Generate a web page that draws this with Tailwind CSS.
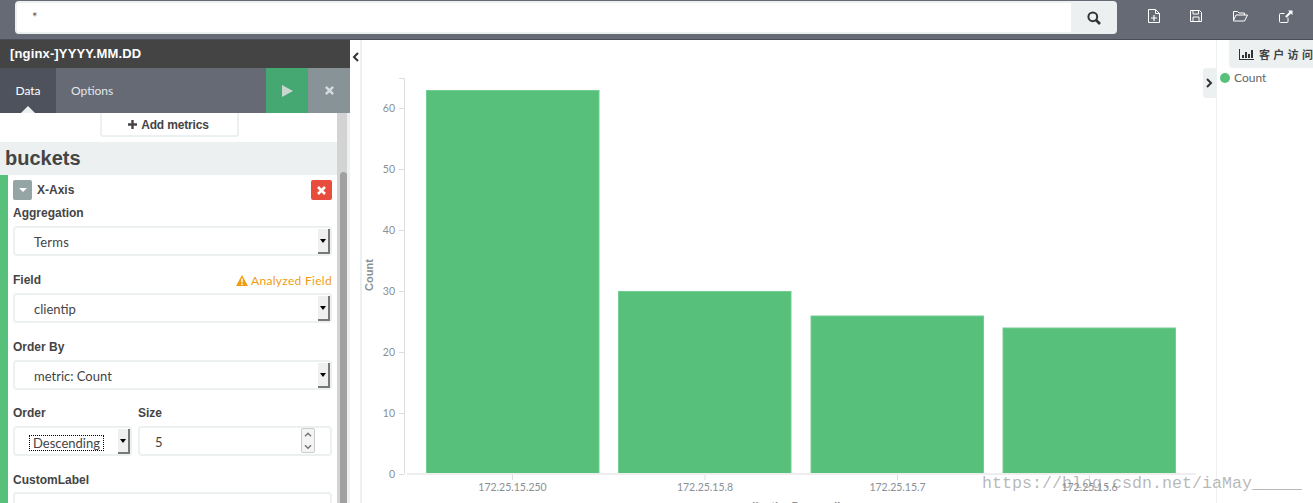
<!DOCTYPE html>
<html lang="en">
<head>
    <meta charset="UTF-8">
    <title>Visualize</title>
    <script src="https://cdn.jsdelivr.net/npm/@tailwindcss/browser@4"></script>
</head>
<body class="w-[1313px] h-[503px] overflow-hidden relative bg-white text-[#444] font-['Liberation_Sans',sans-serif]">
    <!-- search bar -->
    <div class="h-10 bg-[#666a75] border-b border-[#4a4d57] flex items-start pl-[15px] pt-px">
        <div class="w-[1056px] h-[33px] bg-white border-2 border-r-0 border-[#ecf0f1] rounded-l-[4px] pl-[15px] pt-[5px] text-[13px] text-[#555] font-['Lato',sans-serif]">*</div>
        <div class="w-[46px] h-[33px] bg-[#ecf0f1] rounded-r-[4px] flex items-center justify-center">
            <svg width="14" height="14" viewBox="0 0 14 14" fill="none" stroke="#333" stroke-width="2"><circle cx="5.8" cy="5.8" r="4.4"/><path d="M9 9l4 4" stroke-width="2.6"/></svg>
        </div>
        <div class="flex items-center h-[30px]">
            <svg class="ml-[31px]" width="12" height="14" viewBox="0 0 12 14" fill="none" stroke="#fff"><path d="M.5.5h7l4 4v9h-11zM7.500.5v4h4"/><path d="M6 6v6M3 9h6" stroke-width="1.2"/></svg>
            <svg class="ml-[30px]" width="12" height="12" viewBox="0 0 12 12" fill="none" stroke="#fff"><path d="M.5.5h9l2 2v9h-11zM3 .5v3.500h5.500v-3.500M3 11.500v-4.500h6v4.500"/></svg>
            <svg class="ml-[31px]" width="15" height="12" viewBox="0 0 15 12" fill="none" stroke="#fff"><path d="M.5 10.500v-9h4l1.500 1.500h5.500v2M.5 10.500l2.500-5.500h11.500l-3 6h-11z"/></svg>
            <svg class="ml-[31px]" width="14" height="13" viewBox="0 0 14 13" fill="none" stroke="#fff"><path d="M9 7.500v4a1 1 0 0 1-1 1h-6.500a1 1 0 0 1-1-1v-7a1 1 0 0 1 1-1h4"/><path d="M9 .5h4.500v4.500l-1.600-1.500-4.400 4.200-1.400-1.400 4.400-4.300z" fill="#fff" stroke="none"/></svg>
        </div>
    </div>

    <div class="flex h-[463px]">
        <!-- sidebar -->
        <div class="w-[350px] flex flex-col shrink-0">
            <div class="h-[28px] bg-[#444] text-white text-[13px] font-bold pl-[10px] leading-[28px] tracking-[0.15px]">[nginx-]YYYY.MM.DD</div>
            <div class="h-[45px] bg-[#666a75] flex text-[12px] font-['Lato',sans-serif] text-[#e4e6e8]">
                <div class="w-[56px] bg-[#4e525d] relative flex items-center justify-center text-white">
                    Data
                    <div class="absolute bottom-0 left-[21px] border-x-[7px] border-x-transparent border-b-[7px] border-b-[#ecf0f1]"></div>
                </div>
                <div class="flex-1 pl-[15px] flex items-center">Options</div>
                <div class="w-[42px] bg-[#45a873] flex items-center justify-center">
                    <svg width="11" height="12" viewBox="0 0 11 12"><path d="M0 0l11 6-11 6z" fill="#c9d6ce"/></svg>
                </div>
                <div class="w-[42px] bg-[#879396] flex items-center justify-center">
                    <svg width="9" height="9" viewBox="0 0 10 10" stroke="#d5dbdd" stroke-width="2.800"><path d="M1 1l8 8M9 1l-8 8"/></svg>
                </div>
            </div>
            <div class="flex-1 flex overflow-hidden">
                <div class="w-[337px] shrink-0">
                    <div class="h-[24px] w-[139px] ml-[100px] pt-[1px] pr-[2px] border-2 border-t-0 border-[#ecf0f1] rounded-b-[3px] flex items-center justify-center text-[12px] font-bold gap-1 tracking-[-0.15px]">
                        <svg width="9" height="9" viewBox="0 0 9 9" stroke="#444" stroke-width="2.400"><path d="M4.500 0v9M0 4.500h9"/></svg>
                        Add metrics
                    </div>
                    <div class="h-[33px] mt-[5px] bg-[#ecf0f1] pl-[5px] text-[20px] font-bold leading-[33px]">buckets</div>
                    <div class="border-l-[8px] border-[#57c17b] pl-[5px] pr-[5px] h-[328px]">
                        <div class="flex items-center pt-[5px] h-[25px]">
                            <div class="w-[19px] h-[20px] rounded-[2px] bg-[#95a5a6] flex items-center justify-center">
                                <div class="border-x-[4px] border-x-transparent border-t-[4px] border-t-white"></div>
                            </div>
                            <div class="ml-[5px] text-[12px] font-bold flex-1">X-Axis</div>
                            <div class="w-[21px] h-[20px] rounded-[2px] bg-[#e74c3c] flex items-center justify-center">
                                <svg width="9" height="9" viewBox="0 0 9 9" stroke="#fff" stroke-width="2.600"><path d="M1 1l7 7M8 1l-7 7"/></svg>
                            </div>
                        </div>

                        <div class="mt-[6px] h-[15px] text-[12px] font-bold leading-[15px]">Aggregation</div>
                        <div class="mt-[5px] h-[30px] border-2 border-[#ecf0f1] rounded-[4px] flex items-center pl-[19px] pt-[4px] text-[13px] tracking-[0.2px] font-['Lato',sans-serif] relative">
                            Terms
                            <div class="absolute right-[0px] top-[1px] w-[12px] h-[25px] bg-[#efefef] border-r-2 border-b-2 border-[#777] flex items-center justify-center">
                                <div class="border-x-[3px] border-x-transparent border-t-[4px] border-t-black"></div>
                            </div>
                        </div>

                        <div class="mt-[17px] h-[15px] flex justify-between items-start text-[12px] leading-[15px]">
                            <span class="font-bold">Field</span>
                            <span class="flex items-center gap-[3px] text-[#f39c12] font-['Lato',sans-serif] tracking-[0.3px]">
                                <svg width="12" height="11" viewBox="0 0 12 11"><path d="M6 0l6 11h-12z" fill="#f39c12"/><path d="M6 3.500v4M6 8.500v1.500" stroke="#fff" stroke-width="1.500"/></svg>
                                Analyzed Field
                            </span>
                        </div>
                        <div class="mt-[5px] h-[30px] border-2 border-[#ecf0f1] rounded-[4px] flex items-center pl-[19px] pt-[4px] text-[13px] font-['Lato',sans-serif] relative">
                            clientip
                            <div class="absolute right-[0px] top-[1px] w-[12px] h-[25px] bg-[#efefef] border-r-2 border-b-2 border-[#777] flex items-center justify-center">
                                <div class="border-x-[3px] border-x-transparent border-t-[4px] border-t-black"></div>
                            </div>
                        </div>

                        <div class="mt-[17px] h-[15px] text-[12px] font-bold leading-[15px]">Order By</div>
                        <div class="mt-[5px] h-[30px] border-2 border-[#ecf0f1] rounded-[4px] flex items-center pl-[19px] pt-[4px] text-[13px] font-['Lato',sans-serif] relative">
                            metric: Count
                            <div class="absolute right-[0px] top-[1px] w-[12px] h-[25px] bg-[#efefef] border-r-2 border-b-2 border-[#777] flex items-center justify-center">
                                <div class="border-x-[3px] border-x-transparent border-t-[4px] border-t-black"></div>
                            </div>
                        </div>

                        <div class="mt-[16px] flex gap-[6px]">
                            <div class="w-[119px]">
                                <div class="h-[15px] text-[12px] font-bold leading-[15px]">Order</div>
                                <div class="mt-[5px] h-[30px] border-2 border-[#ecf0f1] rounded-[4px] flex items-center pl-[15px] pt-[4px] text-[13px] font-['Lato',sans-serif] relative">
                                    <span class="outline-1 outline-dotted outline-black leading-[14px] px-[3px]">Descending</span>
                                    <div class="absolute right-[0px] top-[1px] w-[12px] h-[25px] bg-[#efefef] border-r-2 border-b-2 border-[#777] flex items-center justify-center">
                                        <div class="border-x-[3px] border-x-transparent border-t-[4px] border-t-black"></div>
                                    </div>
                                </div>
                            </div>
                            <div class="w-[194px]">
                                <div class="h-[15px] text-[12px] font-bold leading-[15px]">Size</div>
                                <div class="mt-[5px] h-[30px] border-2 border-[#ecf0f1] rounded-[4px] flex items-center pl-[15px] pt-[3px] text-[13px] font-['Lato',sans-serif] relative">
                                    5
                                    <div class="absolute right-[15px] top-0 w-[14px] h-[25px] flex flex-col border border-[#ccc] rounded-[2px] bg-[#f4f4f4]">
                                        <svg class="flex-1" viewBox="0 0 12 11" fill="none" stroke="#777" stroke-width="1.500"><path d="M3 7l3-3 3 3"/></svg>
                                        <svg class="flex-1" viewBox="0 0 12 11" fill="none" stroke="#777" stroke-width="1.500"><path d="M3 4l3 3 3-3"/></svg>
                                    </div>
                                </div>
                            </div>
                        </div>

                        <div class="mt-[17px] h-[15px] text-[12px] font-bold leading-[15px]">CustomLabel</div>
                        <div class="mt-[4px] h-[30px] border-2 border-[#ecf0f1] rounded-[4px]"></div>
                    </div>
                </div>
                <!-- scrollbar -->
                <div class="w-[10px] bg-[#d3d3d3] pl-[3px]">
                    <div class="mt-[59px] w-[7px] h-[340px] bg-[#a0a0a0] rounded-t-[4px]"></div>
                </div>
                <div class="w-[3px] bg-[#ecf0f1]"></div>
            </div>
        </div>

        <!-- collapse column -->
        <div class="w-[12px] shrink-0 flex">
            <div class="w-[10px] bg-white pt-[12px] flex justify-center">
                <svg width="7" height="10" viewBox="0 0 7 10" fill="none" stroke="#333" stroke-width="2"><path d="M6 1l-4 4 4 4"/></svg>
            </div>
            <div class="w-[2px] bg-[#ecf0f1]"></div>
        </div>

        <!-- chart -->
        <svg class="shrink-0 font-['Lato',sans-serif]" width="854" height="463" viewBox="362 40 854 463">
            <g fill="#57c17b" stroke="#74cd92">
                <rect x="426.500" y="90.500" width="172.500" height="383"/>
                <rect x="618.500" y="291.500" width="172.500" height="182"/>
                <rect x="811" y="316" width="172.500" height="157.500"/>
                <rect x="1003" y="328" width="172.500" height="145.500"/>
            </g>
            <path d="M407 474h789" stroke="#eee" stroke-width="2"/>
            <g stroke="#ddd" fill="none">
                <path d="M404.500 78v396M399 78.500h5M399 108.500h5M399 169.500h5M399 230.500h5M399 291.500h5M399 352.500h5M399 413.500h5M399 474.500h5"/>
                <path d="M512.500 475v5M705 475v5M897.500 475v5M1089.500 475v5"/>
            </g>
            <g fill="#8a9095" font-size="10.500" text-anchor="end">
                <text x="395" y="112">60</text>
                <text x="395" y="173">50</text>
                <text x="395" y="234">40</text>
                <text x="395" y="295">30</text>
                <text x="395" y="356">20</text>
                <text x="395" y="417">10</text>
                <text x="395" y="478">0</text>
            </g>
            <g fill="#8a9095" font-size="10.500" text-anchor="middle">
                <text x="512.500" y="491">172.25.15.250</text>
                <text x="705" y="491">172.25.15.8</text>
                <text x="897.500" y="491">172.25.15.7</text>
                <text x="1089.500" y="491">172.25.15.6</text>
            </g>
            <text x="0" y="0" transform="translate(373 275) rotate(-90)" text-anchor="middle" font-size="11" font-weight="700" fill="#8a8f94" font-family="Liberation Sans">Count</text>
            <text x="800" y="510" text-anchor="middle" font-size="11" font-weight="700" fill="#8a8f94" font-family="Liberation Sans">clientip: Descending</text>
        </svg>

        <!-- legend -->
        <div class="flex-1 border-l border-[#ecf0f1] relative pl-[3px] pt-[29px] text-[12px] font-['Lato',sans-serif] text-[#666]">
            <div class="flex items-center gap-[4px]">
                <div class="w-[10px] h-[10px] rounded-full bg-[#57c17b]"></div>
                <span>Count</span>
            </div>
            <div class="absolute left-[-14px] top-[28px] w-[13px] h-[30px] bg-[#ecf0f1] rounded-l-[3px] flex items-center justify-center">
                <svg width="7" height="10" viewBox="0 0 7 10" fill="none" stroke="#333" stroke-width="2"><path d="M1 1l4 4-4 4"/></svg>
            </div>
            <div class="absolute left-[12px] top-0 w-[85px] h-[28px] bg-[#ecf0f1] rounded-bl-[4px] flex items-center pl-[10px] gap-[5px] text-[11px] text-[#444] font-bold font-['Noto_Sans_CJK_SC',sans-serif] tracking-[3.3px] whitespace-nowrap">
                <svg class="shrink-0" width="15" height="11" viewBox="0 0 15 11" fill="#333"><path d="M0 0h1v10h14v1h-15z"/><path d="M3 6h2v3h-2zM6 3h2v6h-2zM9 5h2v4h-2zM12 1h2v8h-2z"/></svg>
                客户访问
            </div>
        </div>
    </div>

    <!-- watermark -->
    <div class="absolute left-[982px] top-[474px] text-[16.67px] leading-[20px] text-[#888]/60 font-['Liberation_Mono',monospace] whitespace-pre">https://blog.csdn.net/iaMay_____</div>
</body>
</html>
